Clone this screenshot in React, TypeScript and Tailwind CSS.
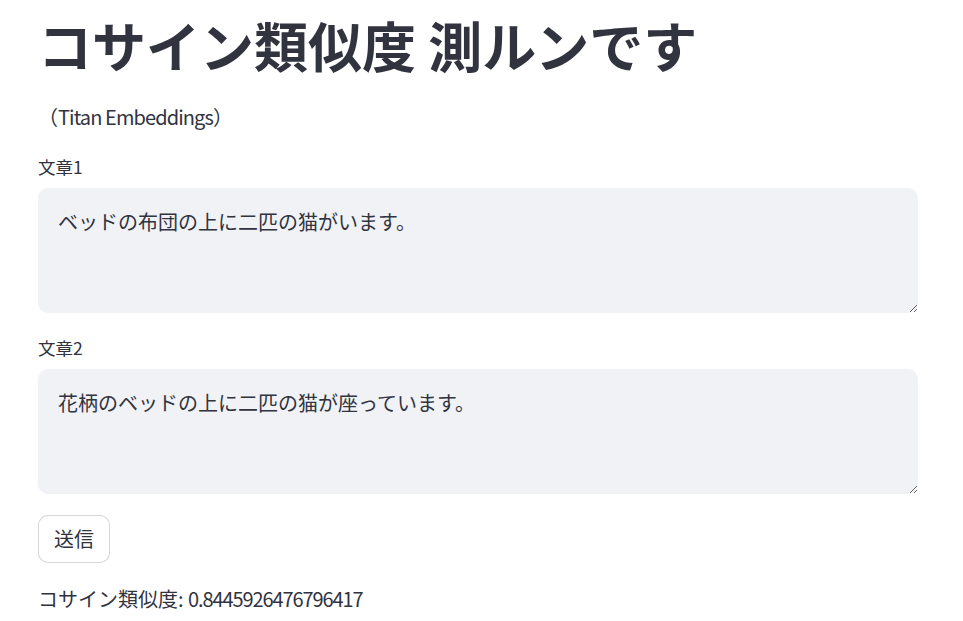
import React from 'react';

const font = { fontFamily: '"Noto Sans CJK JP", "Noto Sans", sans-serif' };

const Field: React.FC<{ label: string; value: string }> = ({ label, value }) => (
  <div className="flex flex-col">
    <label className="h-[28px] mb-[7px] text-[17.5px] leading-[28px] text-[#31333f]">{label}</label>
    <textarea
      defaultValue={value}
      className="h-[125px] w-full rounded-[10px] bg-[#f0f2f6] px-[20px] py-[18px] text-[20px] leading-[32px] text-[#31333f] outline-none resize-y"
      style={font}
    />
  </div>
);

export default function App() {
  return (
    <div className="min-h-screen bg-white" style={font}>
      <div className="w-[880px] ml-[38px] pt-[15px] flex flex-col text-[#31333f]">
        <h1 className="h-[60px] text-[54px] leading-[60px] font-bold text-[#31333f]">
          コサイン類似度 測ルンです
        </h1>
        <p className="mt-[26px] h-[32px] text-[20px] leading-[32px]">
          （<span className="tracking-[-0.9px]">Titan Embeddings</span>）
        </p>
        <div className="mt-[20px]">
          <Field label="文章1" value="ベッドの布団の上に二匹の猫がいます。" />
        </div>
        <div className="mt-[21px]">
          <Field label="文章2" value="花柄のベッドの上に二匹の猫が座っています。" />
        </div>
        <div className="mt-[21px]">
          <button className="h-[48px] px-[15px] rounded-[10px] border border-[#31333f]/20 bg-white text-[20px] leading-[32px] text-[#31333f]">
            送信
          </button>
        </div>
        <p className="mt-[20px] h-[32px] text-[20px] leading-[32px]">
          コサイン類似度: <span className="tracking-[-1.1px]">0.8445926476796417</span>
        </p>
      </div>
    </div>
  );
}
